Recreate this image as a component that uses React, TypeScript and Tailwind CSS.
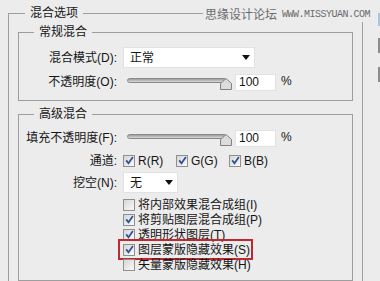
import React from 'react'

// Checkbox with the blue tick used in the dialog
const Check: React.FC<{ checked?: boolean }> = ({ checked }) => (
  <span className="w-[12px] h-[12px] shrink-0 border border-[#8e8f8f] bg-linear-to-br from-[#d6d6d6] to-[#fafafa] flex items-center justify-center">
    {checked && (
      <svg width="9" height="9" viewBox="0 0 9 9">
        <path d="M1.2 4.4 L3.5 7.3 L7.9 1" fill="none" stroke="#2d4f93" strokeWidth="1.7" />
      </svg>
    )}
  </span>
)

const Select: React.FC<{ value: string; width: string }> = ({ value, width }) => (
  <div className={`${width} h-[21px] bg-white border border-[#e2e2e2] flex items-center justify-between pl-[6px] pr-[4px]`}>
    <span>{value}</span>
    <svg width="8" height="5" viewBox="0 0 8 5">
      <path d="M0 0 H8 L4 5 Z" fill="#111" />
    </svg>
  </div>
)

const Slider: React.FC = () => (
  <div className="flex items-start h-[17px]">
    <div className="w-[112px] h-[17px] flex items-start">
      <div className="ml-[4px] mt-[4px] w-[100px] h-[5px] rounded-full border border-[#8a8a8a] bg-linear-to-b from-[#9c9c9c] to-[#dadada]" />
      <svg className="-ml-[7px] mt-[4px]" width="12" height="12" viewBox="0 0 12 12">
        <path d="M6 0.5 L11.5 5.5 L11.5 11.5 L0.5 11.5 L0.5 5.5 Z" fill="#dcdcdc" stroke="#808080" strokeLinejoin="round" />
      </svg>
    </div>
    <div className="w-[41px] h-[17px] bg-white border border-[#e2e2e2] pl-[3px] leading-[15px]">100</div>
    <span className="ml-[5px] leading-[15px]">%</span>
  </div>
)

// Label + control row
const Row: React.FC<{ label: string; children: React.ReactNode; className?: string }> = ({ label, children, className }) => (
  <div className={`flex items-center ${className ?? ''}`}>
    <span className="w-[99px] text-right pr-[1px] whitespace-nowrap">{label}</span>
    <div className="ml-[5px] flex items-center">{children}</div>
  </div>
)

const App: React.FC = () => {
  const options = [
    { label: '将内部效果混合成组(I)', checked: false },
    { label: '将剪贴图层混合成组(P)', checked: true },
    { label: '透明形状图层(T)', checked: true },
    { label: '图层蒙版隐藏效果(S)', checked: true, marked: true },
    { label: '矢量蒙版隐藏效果(H)', checked: false }
  ]

  return (
    <div className="relative w-[380px] h-[281px] overflow-hidden bg-[#ececec] flex text-[12px] text-[#151515] font-['Liberation_Sans','Noto_Sans_CJK_SC',sans-serif]">
      {/* 混合选项 */}
      <fieldset className="ml-[8px] mt-[5px] w-[355px] h-[300px] shrink-0 border border-[#9e9e9e] px-[9px]">
        <legend className="ml-[7px] px-[5px] leading-[16px]">混合选项</legend>

        <fieldset className="mt-[3px] border border-[#9e9e9e] pt-[7px] pb-[9px]">
          <legend className="ml-[15px] px-[5px] leading-[16px]">常规混合</legend>
          <Row label="混合模式(D):">
            <Select value="正常" width="w-[132px]" />
          </Row>
          <Row label="不透明度(O):" className="mt-[5px]">
            <Slider />
          </Row>
        </fieldset>

        <fieldset className="mt-[5px] border border-[#9e9e9e] pt-[7px] pb-[8px]">
          <legend className="ml-[15px] px-[5px] leading-[16px]">高级混合</legend>
          <Row label="填充不透明度(F):">
            <Slider />
          </Row>
          <Row label="通道:" className="mt-[5px] h-[17px]">
            <Check checked />
            <span className="ml-[3px] w-[38px]">R(R)</span>
            <Check checked />
            <span className="ml-[3px] w-[38px]">G(G)</span>
            <Check checked />
            <span className="ml-[3px]">B(B)</span>
          </Row>
          <Row label="挖空(N):" className="mt-[3px]">
            <Select value="无" width="w-[55px]" />
          </Row>
          <div className="mt-[4px] ml-[104px] flex flex-col items-start">
            {options.map((o, i) =>
              o.marked ? (
                <div key={i} className="-ml-[3px] pl-[3px] pr-[1px] h-[17px] -my-[1px] flex items-center outline-2 outline-[#c1272d]">
                  <Check checked={o.checked} />
                  <span className="ml-[3px] whitespace-nowrap">{o.label}</span>
                </div>
              ) : (
                <div key={i} className="h-[15px] flex items-center">
                  <Check checked={o.checked} />
                  <span className="ml-[3px] whitespace-nowrap">{o.label}</span>
                </div>
              )
            )}
          </div>
        </fieldset>
      </fieldset>

      {/* edges of the dialog buttons */}
      <div className="ml-[15px] w-[20px] flex flex-col">
        <div className="mt-[13px] h-[13px] bg-[#a9c6de]" />
        <div className="mt-[12px] h-[15px] bg-[#8c8c8c]" />
        <div className="mt-[14px] h-[15px] bg-[#8c8c8c]" />
      </div>

      {/* watermark */}
      <div className="absolute top-[8px] left-[203px] flex items-center bg-[#ececec] px-[2px] text-[#6a6a6a]">
        <span className="leading-[14px]">思缘设计论坛</span>
        <span className="ml-[5px] text-[10px] tracking-[-0.5px] font-['Liberation_Mono',monospace] leading-[14px]">WWW.MISSYUAN.COM</span>
      </div>
    </div>
  )
}

export default App
